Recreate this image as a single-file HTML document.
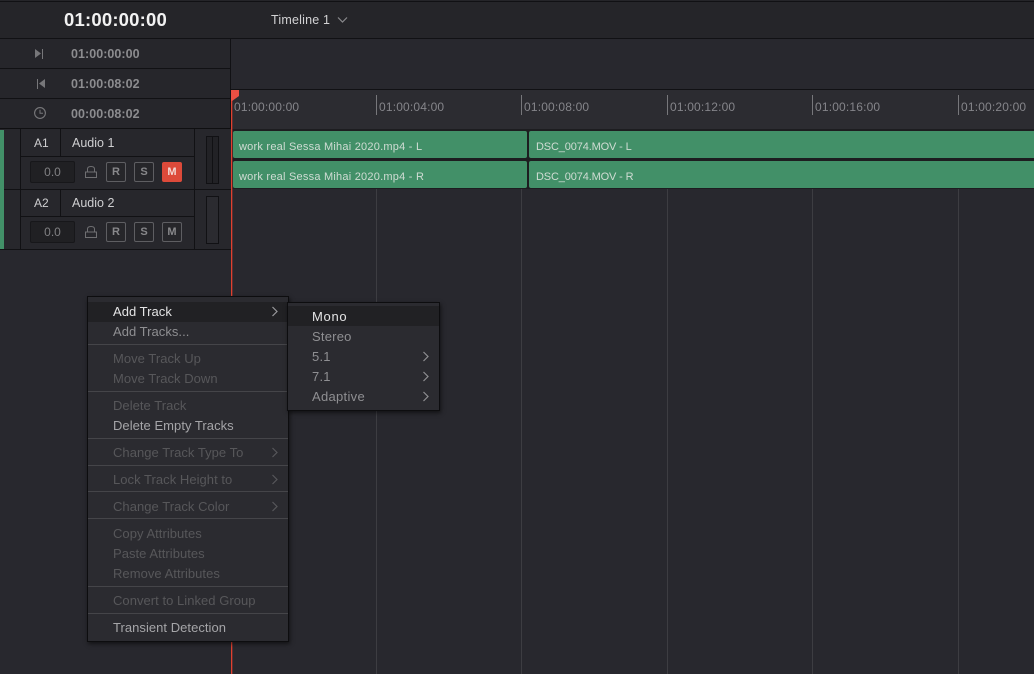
<!DOCTYPE html>
<html><head><meta charset="utf-8"><style>
html,body{margin:0;padding:0;background:#28282e}
#p{position:relative;width:1034px;height:674px;overflow:hidden;background:#28282e;font-family:"Liberation Sans",sans-serif}
#p div,#p span.t{position:absolute}
.t{white-space:nowrap;line-height:16px;position:absolute}
.h{height:1px;background:#111114}
.v{width:1px;background:#111114}
.tc{font-size:12.5px;font-weight:bold;color:#8c8c8f;letter-spacing:.05px}
.rl{font-size:12px;color:#85858a;letter-spacing:.17px}
.tick{width:1px;background:#77777b}
.grid{width:1px;background:#3d3d42}
.clip{background:#429068;height:27px;border-radius:2px}
.ct{font-size:11px;color:#d0dcd4;letter-spacing:.23px}
.btn{width:18px;height:18px;border:1px solid #5e5e62;border-radius:2px;color:#88888b;font-size:11px;font-weight:bold;text-align:center;line-height:18px;background:#26262a}
.vol{width:43px;height:20px;background:#202023;border:1px solid #17171a;color:#808083;font-size:12px;text-align:center;line-height:20px;border-radius:2px}
.m{font-size:13px;letter-spacing:.04px}
.w{color:#c9c9cb}.d{color:#57575a}.s{color:#8f8f92}
.sep{height:1px;background:#454549}
</style></head><body><div id="p">
<div style="left:0;top:0;width:1034px;height:39px;background:#252529"></div>
<div class="h" style="left:0;top:1px;width:1034px"></div>
<div class="h" style="left:0;top:38px;width:1034px"></div>
<span class="t" style="left:64px;top:10px;font-size:18.5px;line-height:20px;font-weight:bold;color:#f2f2f2;letter-spacing:.2px">01:00:00:00</span>
<span class="t" style="left:271px;top:12px;font-size:12.5px;color:#d2d2d4;letter-spacing:.2px">Timeline 1</span>
<svg style="position:absolute;left:337px;top:16px" width="11" height="8"><path d="M1 1.5L5.5 6L10 1.5" fill="none" stroke="#8a8a8d" stroke-width="1.2"/></svg>

<div style="left:0;top:39px;width:231px;height:90px;background:#26262b"></div>
<div class="h" style="left:0;top:68px;width:231px"></div>
<div class="h" style="left:0;top:98px;width:231px"></div>
<div class="h" style="left:0;top:128px;width:1034px;background:#0f0f11"></div>
<div class="v" style="left:230px;top:39px;height:91px"></div>
<svg style="position:absolute;left:34px;top:48px" width="10" height="12"><path d="M1 1L7 5.5L1 10Z" fill="#77777a"/><path d="M8.5 1V11" stroke="#77777a"/></svg>
<svg style="position:absolute;left:36px;top:78px" width="10" height="12"><path d="M9 1L3 5.5L9 10Z" fill="#77777a"/><path d="M1.5 1V11" stroke="#77777a"/></svg>
<svg style="position:absolute;left:33px;top:106px" width="14" height="14"><circle cx="7" cy="7" r="5.4" fill="none" stroke="#77777a" stroke-width="1.1"/><path d="M7 3.8V7.2H10" fill="none" stroke="#77777a"/></svg>
<span class="t tc" style="left:71px;top:46px">01:00:00:00</span>
<span class="t tc" style="left:71px;top:76px">01:00:08:02</span>
<span class="t tc" style="left:71px;top:106px">00:00:08:02</span>

<!-- ruler -->
<div style="left:231px;top:90px;width:803px;height:39px;background:#2c2c31"></div>
<div class="h" style="left:231px;top:89px;width:803px"></div>
<div class="tick" style="left:376px;top:95px;height:20px"></div>
<div class="tick" style="left:521px;top:95px;height:20px"></div>
<div class="tick" style="left:667px;top:95px;height:20px"></div>
<div class="tick" style="left:812px;top:95px;height:20px"></div>
<div class="tick" style="left:958px;top:95px;height:20px"></div>
<span class="t rl" style="left:234px;top:99px">01:00:00:00</span>
<span class="t rl" style="left:379px;top:99px">01:00:04:00</span>
<span class="t rl" style="left:524px;top:99px">01:00:08:00</span>
<span class="t rl" style="left:670px;top:99px">01:00:12:00</span>
<span class="t rl" style="left:815px;top:99px">01:00:16:00</span>
<span class="t rl" style="left:961px;top:99px">01:00:20:00</span>

<!-- grid -->
<div class="grid" style="left:376px;top:189px;height:485px"></div>
<div class="grid" style="left:521px;top:189px;height:485px"></div>
<div class="grid" style="left:667px;top:189px;height:485px"></div>
<div class="grid" style="left:812px;top:189px;height:485px"></div>
<div class="grid" style="left:958px;top:189px;height:485px"></div>

<!-- clips -->
<div style="left:231px;top:129px;width:803px;height:60px;background:#1d1d20"></div>
<div class="clip" style="left:233px;top:131px;width:294px"></div>
<div class="clip" style="left:233px;top:161px;width:294px"></div>
<div class="clip" style="left:529px;top:131px;width:505px;border-radius:2px 0 0 2px"></div>
<div class="clip" style="left:529px;top:161px;width:505px;border-radius:2px 0 0 2px"></div>
<span class="t ct" style="left:239px;top:139px">work real Sessa Mihai 2020.mp4 - L</span>
<span class="t ct" style="left:239px;top:169px">work real Sessa Mihai 2020.mp4 - R</span>
<span class="t ct" style="left:536px;top:139px;letter-spacing:-.14px">DSC_0074.MOV - L</span>
<span class="t ct" style="left:536px;top:169px;letter-spacing:-.14px">DSC_0074.MOV - R</span>

<!-- track headers -->
<div style="left:0;top:129px;width:231px;height:120px;background:#27272c"></div>
<div style="left:0;top:130px;width:4px;height:119px;background:#429068"></div>
<div class="v" style="left:20px;top:129px;height:120px"></div>
<div class="v" style="left:60px;top:129px;height:27px"></div>
<div class="v" style="left:60px;top:189px;height:27px"></div>
<div class="v" style="left:194px;top:129px;height:120px"></div>
<div class="h" style="left:20px;top:156px;width:174px"></div>
<div class="h" style="left:4px;top:189px;width:227px"></div>
<div class="h" style="left:20px;top:216px;width:174px"></div>
<div class="h" style="left:0;top:249px;width:231px"></div>
<span class="t" style="left:34px;top:135px;font-size:12px;color:#cfcfd1">A1</span>
<span class="t" style="left:72px;top:135px;font-size:12.5px;color:#cfcfd1">Audio 1</span>
<span class="t" style="left:34px;top:195px;font-size:12px;color:#cfcfd1">A2</span>
<span class="t" style="left:72px;top:195px;font-size:12.5px;color:#cfcfd1">Audio 2</span>
<div class="vol" style="left:30px;top:161px">0.0</div>
<div class="vol" style="left:30px;top:221px">0.0</div>
<svg style="position:absolute;left:84px;top:165px" width="14" height="14"><path d="M1.5 7H12.5V12.5H1.5ZM3.5 7V4Q3.5 1.5 7 1.5Q10.5 1.5 10.5 4V7" fill="none" stroke="#6f6f72"/></svg>
<svg style="position:absolute;left:84px;top:225px" width="14" height="14"><path d="M1.5 7H12.5V12.5H1.5ZM3.5 7V4Q3.5 1.5 7 1.5Q10.5 1.5 10.5 4V7" fill="none" stroke="#6f6f72"/></svg>
<div class="btn" style="left:106px;top:162px">R</div>
<div class="btn" style="left:134px;top:162px">S</div>
<div class="btn" style="left:162px;top:162px;width:20px;height:20px;line-height:20px;background:#dd4a3a;border:0;color:#f3d9d5">M</div>
<div class="btn" style="left:106px;top:222px">R</div>
<div class="btn" style="left:134px;top:222px">S</div>
<div class="btn" style="left:162px;top:222px">M</div>
<div style="left:206px;top:136px;width:11px;height:46px;background:#222226;border:1px solid #111114"></div>
<div class="v" style="left:212px;top:136px;height:47px"></div>
<div style="left:206px;top:196px;width:11px;height:46px;background:#2b2b30;border:1px solid #111114"></div>

<!-- playhead -->
<div style="left:231px;top:90px;width:1px;height:584px;background:#e0402f;box-shadow:1px 0 0 rgba(200,60,50,.35)"></div>
<svg style="position:absolute;left:231px;top:90px" width="9" height="12"><path d="M0 0H8V6L1 11H0Z" fill="#ea4f43"/></svg>

<!-- main menu -->
<div style="left:87px;top:296px;width:200px;height:344px;background:#2b2b30;border:1px solid #0d0d0f;box-shadow:1px 2px 4px rgba(0,0,0,.55)"></div>
<div style="left:88px;top:302px;width:200px;height:20px;background:#212124"></div>
<span class="t m w" style="left:113px;top:304px;color:#e4e4e5">Add Track</span>
<span class="t m s" style="left:113px;top:324px">Add Tracks...</span>
<div class="sep" style="left:88px;top:344px;width:200px"></div>
<span class="t m d" style="left:113px;top:351px">Move Track Up</span>
<span class="t m d" style="left:113px;top:371px">Move Track Down</span>
<div class="sep" style="left:88px;top:391px;width:200px"></div>
<span class="t m d" style="left:113px;top:398px">Delete Track</span>
<span class="t m s" style="left:113px;top:418px;color:#a5a5a8">Delete Empty Tracks</span>
<div class="sep" style="left:88px;top:438px;width:200px"></div>
<span class="t m d" style="left:113px;top:445px">Change Track Type To</span>
<div class="sep" style="left:88px;top:465px;width:200px"></div>
<span class="t m d" style="left:113px;top:472px">Lock Track Height to</span>
<div class="sep" style="left:88px;top:491px;width:200px"></div>
<span class="t m d" style="left:113px;top:499px">Change Track Color</span>
<div class="sep" style="left:88px;top:518px;width:200px"></div>
<span class="t m d" style="left:113px;top:526px">Copy Attributes</span>
<span class="t m d" style="left:113px;top:546px">Paste Attributes</span>
<span class="t m d" style="left:113px;top:566px">Remove Attributes</span>
<div class="sep" style="left:88px;top:586px;width:200px"></div>
<span class="t m d" style="left:113px;top:593px">Convert to Linked Group</span>
<div class="sep" style="left:88px;top:613px;width:200px"></div>
<span class="t m s" style="left:113px;top:620px;color:#a5a5a8">Transient Detection</span>
<svg style="position:absolute;left:271px;top:306px" width="8" height="11"><path d="M1.5 1L6 5.5L1.5 10" fill="none" stroke="#9a9a9d" stroke-width="1.2"/></svg>
<svg style="position:absolute;left:271px;top:447px" width="8" height="11"><path d="M1.5 1L6 5.5L1.5 10" fill="none" stroke="#57575a" stroke-width="1.2"/></svg>
<svg style="position:absolute;left:271px;top:474px" width="8" height="11"><path d="M1.5 1L6 5.5L1.5 10" fill="none" stroke="#57575a" stroke-width="1.2"/></svg>
<svg style="position:absolute;left:271px;top:501px" width="8" height="11"><path d="M1.5 1L6 5.5L1.5 10" fill="none" stroke="#57575a" stroke-width="1.2"/></svg>

<!-- submenu -->
<div style="left:287px;top:302px;width:151px;height:107px;background:#2b2b30;border:1px solid #0d0d0f;box-shadow:1px 2px 4px rgba(0,0,0,.55)"></div>
<div style="left:288px;top:306px;width:151px;height:20px;background:#212124"></div>
<span class="t m" style="left:312px;top:309px;color:#e4e4e5;letter-spacing:.7px">Mono</span>
<span class="t m s" style="left:312px;top:329px;letter-spacing:.22px">Stereo</span>
<span class="t m s" style="left:312px;top:349px;letter-spacing:.22px">5.1</span>
<span class="t m s" style="left:312px;top:369px;letter-spacing:.22px">7.1</span>
<span class="t m s" style="left:312px;top:389px;letter-spacing:.3px">Adaptive</span>
<svg style="position:absolute;left:422px;top:351px" width="8" height="11"><path d="M1.5 1L6 5.5L1.5 10" fill="none" stroke="#8f8f92" stroke-width="1.2"/></svg>
<svg style="position:absolute;left:422px;top:371px" width="8" height="11"><path d="M1.5 1L6 5.5L1.5 10" fill="none" stroke="#8f8f92" stroke-width="1.2"/></svg>
<svg style="position:absolute;left:422px;top:391px" width="8" height="11"><path d="M1.5 1L6 5.5L1.5 10" fill="none" stroke="#8f8f92" stroke-width="1.2"/></svg>
</div></body></html>
